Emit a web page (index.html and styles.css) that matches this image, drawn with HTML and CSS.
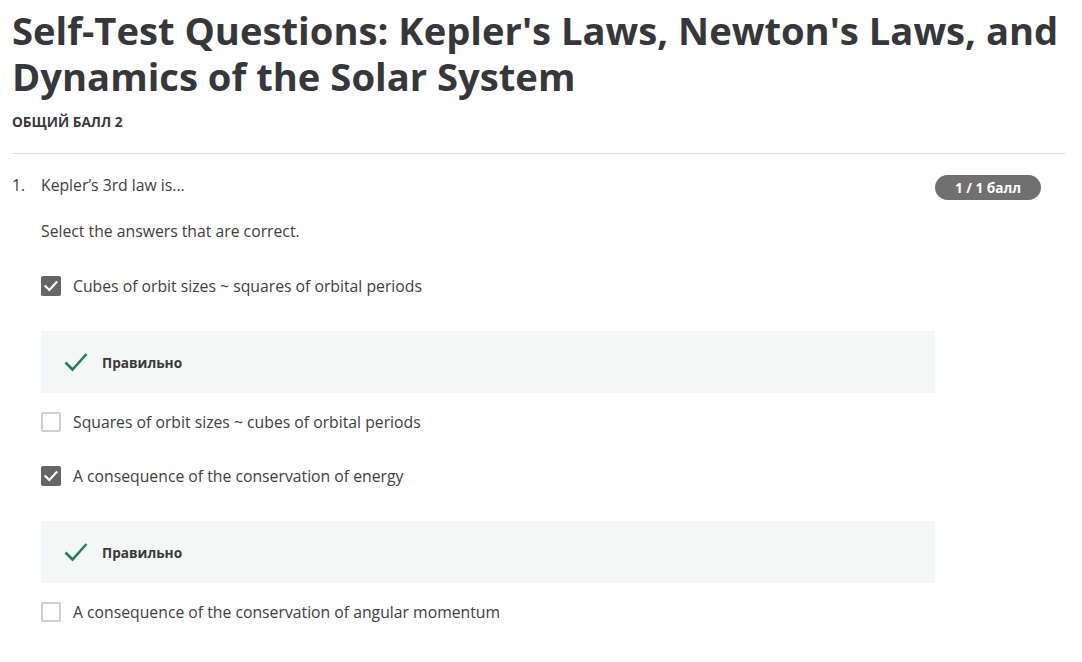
FILE: index.html
```html
<!DOCTYPE html>
<html lang="ru">
<head>
<meta charset="utf-8">
<title>Self-Test Questions</title>
<link rel="stylesheet" href="styles.css">
</head>
<body>
<main class="page">
  <header class="quiz-header">
    <h1 class="quiz-title">Self-Test Questions: Kepler's Laws, Newton's Laws, and Dynamics of the Solar System</h1>
    <div class="quiz-score">Общий балл 2</div>
  </header>
  <section class="question">
    <div class="q-num">1.</div>
    <div class="q-body">
      <div class="q-text">Kepler’s 3rd law is...</div>
      <div class="q-hint">Select the answers that are correct.</div>
      <div class="options">
        <div class="option">
          <div class="option-row">
            <span class="checkbox checked"><svg viewBox="0 0 20 20" width="20" height="20"><path d="M4.5 10.2 L8.3 14 L15.5 6.3" fill="none" stroke="#fff" stroke-width="2.2" stroke-linecap="square"/></svg></span>
            <span class="option-label">Cubes of orbit sizes ~ squares of orbital periods</span>
          </div>
          <div class="feedback">
            <svg class="fb-icon" viewBox="0 0 24 20" width="24" height="20"><path d="M1.5 10.5 L8.5 17.5 L22.5 2" fill="none" stroke="#1f8357" stroke-width="2.6"/></svg>
            <span class="fb-text">Правильно</span>
          </div>
        </div>
        <div class="option">
          <div class="option-row">
            <span class="checkbox"></span>
            <span class="option-label">Squares of orbit sizes ~ cubes of orbital periods</span>
          </div>
        </div>
        <div class="option">
          <div class="option-row">
            <span class="checkbox checked"><svg viewBox="0 0 20 20" width="20" height="20"><path d="M4.5 10.2 L8.3 14 L15.5 6.3" fill="none" stroke="#fff" stroke-width="2.2" stroke-linecap="square"/></svg></span>
            <span class="option-label">A consequence of the conservation of energy</span>
          </div>
          <div class="feedback">
            <svg class="fb-icon" viewBox="0 0 24 20" width="24" height="20"><path d="M1.5 10.5 L8.5 17.5 L22.5 2" fill="none" stroke="#1f8357" stroke-width="2.6"/></svg>
            <span class="fb-text">Правильно</span>
          </div>
        </div>
        <div class="option">
          <div class="option-row">
            <span class="checkbox"></span>
            <span class="option-label">A consequence of the conservation of angular momentum</span>
          </div>
        </div>
      </div>
    </div>
    <div class="q-aside">
      <span class="badge">1 / 1 балл</span>
    </div>
  </section>
</main>
</body>
</html>
```
FILE: styles.css
```css
html, body {
  margin: 0;
  padding: 0;
  background: #fff;
}
body {
  font-family: "Open Sans", "Liberation Sans", sans-serif;
  color: #373a3c;
}
.page {
  width: 1053px;
  padding: 7px 0 0 12px;
}
.quiz-header {
  border-bottom: 1px solid #dcdcdc;
  padding-bottom: 22px;
}
.quiz-title {
  margin: 0;
  font-size: 38.2px;
  line-height: 46px;
  font-weight: 700;
  color: #35373a;
}
.quiz-score {
  margin-top: 14px;
  font-size: 13.65px;
  line-height: 18px;
  font-weight: 700;
  text-transform: uppercase;
  color: #373a3c;
}
.question {
  display: grid;
  grid-template-columns: 29px 894px 1fr;
  padding-top: 20px;
}
.q-num, .q-text, .q-hint, .option-label {
  font-size: 15.75px;
  line-height: 22px;
  color: #3c3e40;
}
.q-hint {
  margin-top: 24px;
}
.options {
  margin-top: 34px;
  display: flex;
  flex-direction: column;
}
.option {
  display: flex;
  flex-direction: column;
  margin-bottom: 19px;
}
.option-row {
  display: flex;
  align-items: center;
  gap: 12px;
  height: 20px;
  margin-bottom: 15px;
}
.checkbox {
  box-sizing: border-box;
  width: 20px;
  height: 20px;
  flex: none;
  border: 2px solid #cfcfcf;
  border-radius: 2px;
  background: #fff;
  display: flex;
}
.checkbox.checked {
  border: none;
  background: #666;
}
.feedback {
  margin-top: 20px;
  height: 62px;
  background: #f3f8f7;
  display: flex;
  align-items: center;
  padding-left: 23px;
  gap: 14px;
}
.fb-icon {
  flex: none;
}
.fb-text {
  font-size: 13.65px;
  font-weight: 700;
  color: #373a3c;
}
.q-aside {
  display: flex;
  align-items: flex-start;
}
.badge {
  margin-top: 1px;
  height: 25px;
  width: 106px;
  border-radius: 13px;
  background: #707070;
  color: #fff;
  font-size: 13.65px;
  font-weight: 700;
  display: flex;
  align-items: center;
  justify-content: center;
}
```
